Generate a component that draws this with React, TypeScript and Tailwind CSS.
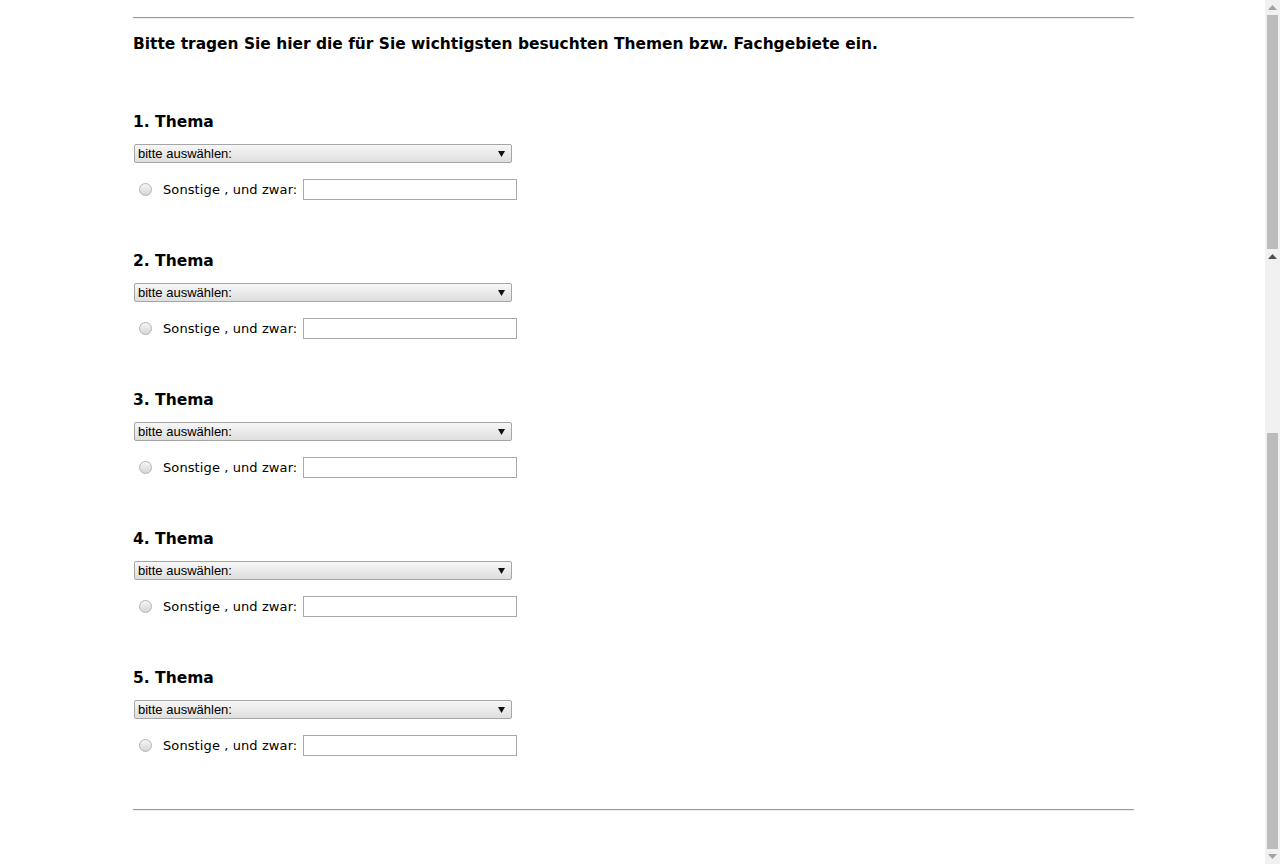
import React from 'react';

const topics = [1, 2, 3, 4, 5];

function Triangle({ up, color }: { up: boolean; color: string }) {
  return (
    <svg width="9" height="5" viewBox="0 0 9 5">
      <polygon points={up ? '4.5,0 9,5 0,5' : '0,0 9,0 4.5,5'} fill={color} />
    </svg>
  );
}

function Scrollbar() {
  return (
    <div className="flex w-[15px] shrink-0 flex-col bg-[#f1f1f1]">
      <div className="flex h-[15px] items-center justify-center">
        <Triangle up color="#a3a3a3" />
      </div>
      <div className="mx-[2px] h-[234px] bg-[#bcbcbc]" />
      <div className="flex h-[15px] items-center justify-center">
        <Triangle up color="#505050" />
      </div>
      <div className="h-[169px]" />
      <div className="mx-[2px] h-[416px] bg-[#bcbcbc]" />
      <div className="flex h-[15px] items-center justify-center">
        <Triangle up={false} color="#a3a3a3" />
      </div>
    </div>
  );
}

function Divider() {
  return <div className="h-[2px] border-t border-b border-t-[#9a9a9a] border-b-[#eeeeee]" />;
}

function TopicBlock({ n }: { n: number }) {
  return (
    <div className="flex flex-col">
      <h3 className="h-[18px] text-[15.5px] font-bold leading-[18px] text-black">{n}. Thema</h3>

      {/* Select */}
      <div className="mt-[13px] ml-px flex h-[19px] w-[378px] items-center justify-between rounded-[2px] border border-[#a6a6a6] bg-gradient-to-b from-[#f7f7f7] to-[#dedede] pl-[3px] pr-[6px]">
        <span className="font-['Liberation_Sans',Arial,sans-serif] text-[13px] leading-[15px] text-black">
          bitte auswählen:
        </span>
        <svg width="7" height="6" viewBox="0 0 7 6">
          <polygon points="0,0 7,0 3.5,6" fill="#111" />
        </svg>
      </div>

      {/* Radio + other */}
      <div className="mt-[16px] flex h-[21px] items-center">
        <span className="ml-[6px] h-[13px] w-[13px] rounded-full border border-[#b4b4b4] bg-gradient-to-b from-[#f6f6f6] to-[#d6d6d6]" />
        <span className="ml-[11px] text-[13px] leading-[16px] tracking-[0.1px] text-black">Sonstige , und zwar:</span>
        <div className="ml-[6px] h-[21px] w-[214px] border border-[#a9a9a9] bg-white" />
      </div>
    </div>
  );
}

export default function App() {
  return (
    <div className="flex h-[864px] w-full overflow-hidden bg-white font-['DejaVu_Sans',Verdana,sans-serif]">
      <div className="flex-1">
        <div className="ml-[133px] w-[1001px] pt-[17px]">
          <Divider />
          <p className="mt-[16px] text-[15.45px] font-bold leading-[18px] text-black">
            Bitte tragen Sie hier die für Sie wichtigsten besuchten Themen bzw. Fachgebiete ein.
          </p>

          <div className="mt-[60px] flex flex-col gap-[52px]">
            {topics.map(n => (
              <TopicBlock key={n} n={n} />
            ))}
          </div>

          <div className="mt-[53px]">
            <Divider />
          </div>
        </div>
      </div>
      <Scrollbar />
    </div>
  );
}
